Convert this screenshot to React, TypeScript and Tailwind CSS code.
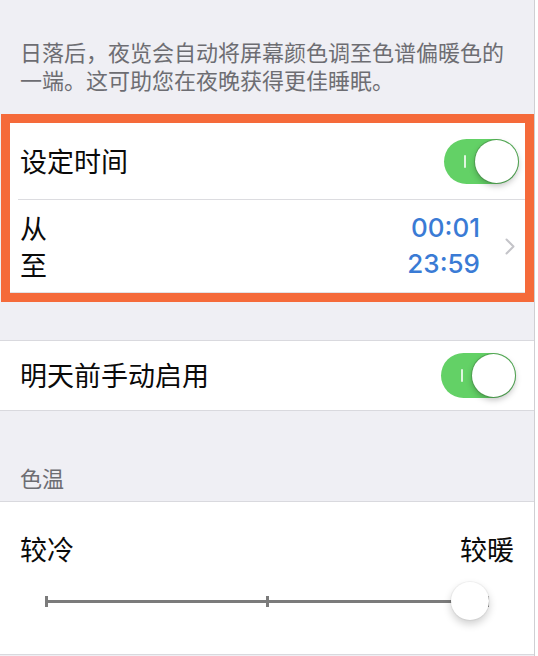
import React from "react";

const cjk = { fontFamily: '"Noto Sans CJK SC", "Noto Sans", sans-serif' };

function Toggle() {
  return (
    <div className="relative h-[45px] w-[75px] rounded-full bg-[#63d166]">
      <div className="absolute left-[20px] top-[16px] h-[13px] w-[2px] rounded-full bg-white/80" />
      <div className="absolute right-[1px] top-[1px] h-[43px] w-[43px] rounded-full bg-white shadow-[0_0_0_1px_rgba(70,130,70,0.5),0_3px_6px_rgba(0,0,0,0.25)]" />
    </div>
  );
}

function Chevron() {
  return (
    <svg width="10" height="17" viewBox="0 0 10 17" fill="none">
      <path d="M1.5 1.5 L8.5 8.5 L1.5 15.5" stroke="#c4c4c9" strokeWidth="2" strokeLinecap="round" strokeLinejoin="round" />
    </svg>
  );
}

function Slider() {
  return (
    <div className="relative mx-[45px] mt-[15px] h-[40px]">
      {/* track */}
      <div className="absolute left-0 right-[2px] top-[19px] h-[3px] bg-[#7b7b7b]" />
      {/* tick marks */}
      <div className="absolute left-0 top-[15px] h-[11px] w-[3px] bg-[#7b7b7b]" />
      <div className="absolute left-[221px] top-[15px] h-[11px] w-[3px] bg-[#7b7b7b]" />
      <div className="absolute right-0 top-[15px] h-[11px] w-[3px] bg-[#7b7b7b]" />
      {/* thumb */}
      <div className="absolute left-[406px] top-[1px] h-[38px] w-[38px] rounded-full bg-white shadow-[0_0_0_1px_rgba(0,0,0,0.04),0_4px_8px_rgba(0,0,0,0.2)]" />
    </div>
  );
}

export default function App() {
  return (
    <div className="h-[656px] w-[538px] overflow-hidden bg-white" style={cjk}>
      <div className="h-full w-[535px] border-r border-[#cfcfd3] bg-[#efeff4]">
        {/* footer note above the schedule group */}
        <p className="px-[20px] pt-[37px] text-[22px] leading-[28px] text-[#6d6d72]">
          日落后，夜览会自动将屏幕颜色调至色谱偏暖色的一端。这可助您在夜晚获得更佳睡眠。
        </p>

        {/* schedule group, outlined */}
        <div className="ml-[1px] mt-[21px] w-[533px] border-[9px] border-[#f56a3a] bg-white">
          <div className="flex h-[76px] items-center justify-between pl-[10px] pr-[6px]">
            <span className="text-[27px] text-[#0a0a0a]">设定时间</span>
            <Toggle />
          </div>
          <div className="ml-[8px] h-px bg-[#dcdce0]" />
          <div className="flex h-[93px] items-center justify-between border-b border-[#e2e2e6] pl-[10px] pr-[10px]">
            <div className="flex flex-col text-[27px] leading-[37px] text-[#0a0a0a]">
              <span>从</span>
              <span>至</span>
            </div>
            <div className="flex items-center gap-[25px]">
              <div
                className="flex flex-col items-end text-[26px] font-medium leading-[36px] text-[#3a7bd5]"
                style={{ fontFamily: "Inter, Roboto, sans-serif" }}
              >
                <span>00:01</span>
                <span>23:59</span>
              </div>
              <Chevron />
            </div>
          </div>
        </div>

        {/* manual enable */}
        <div className="mt-[38px] flex h-[71px] items-center justify-between border-y border-[#d9d9de] bg-white pl-[20px] pr-[18px]">
          <span className="text-[27px] text-[#0a0a0a]">明天前手动启用</span>
          <Toggle />
        </div>

        {/* color temperature */}
        <div className="px-[20px] pb-[10px] pt-[52px] text-[22px] leading-[28px] text-[#6d6d72]">色温</div>
        <div className="h-[154px] border-y border-[#d9d9de] bg-white">
          <div className="flex justify-between px-[20px] pt-[30px] text-[27px] leading-[34px] text-[#0a0a0a]">
            <span>较冷</span>
            <span>较暖</span>
          </div>
          <Slider />
        </div>
      </div>
    </div>
  );
}
